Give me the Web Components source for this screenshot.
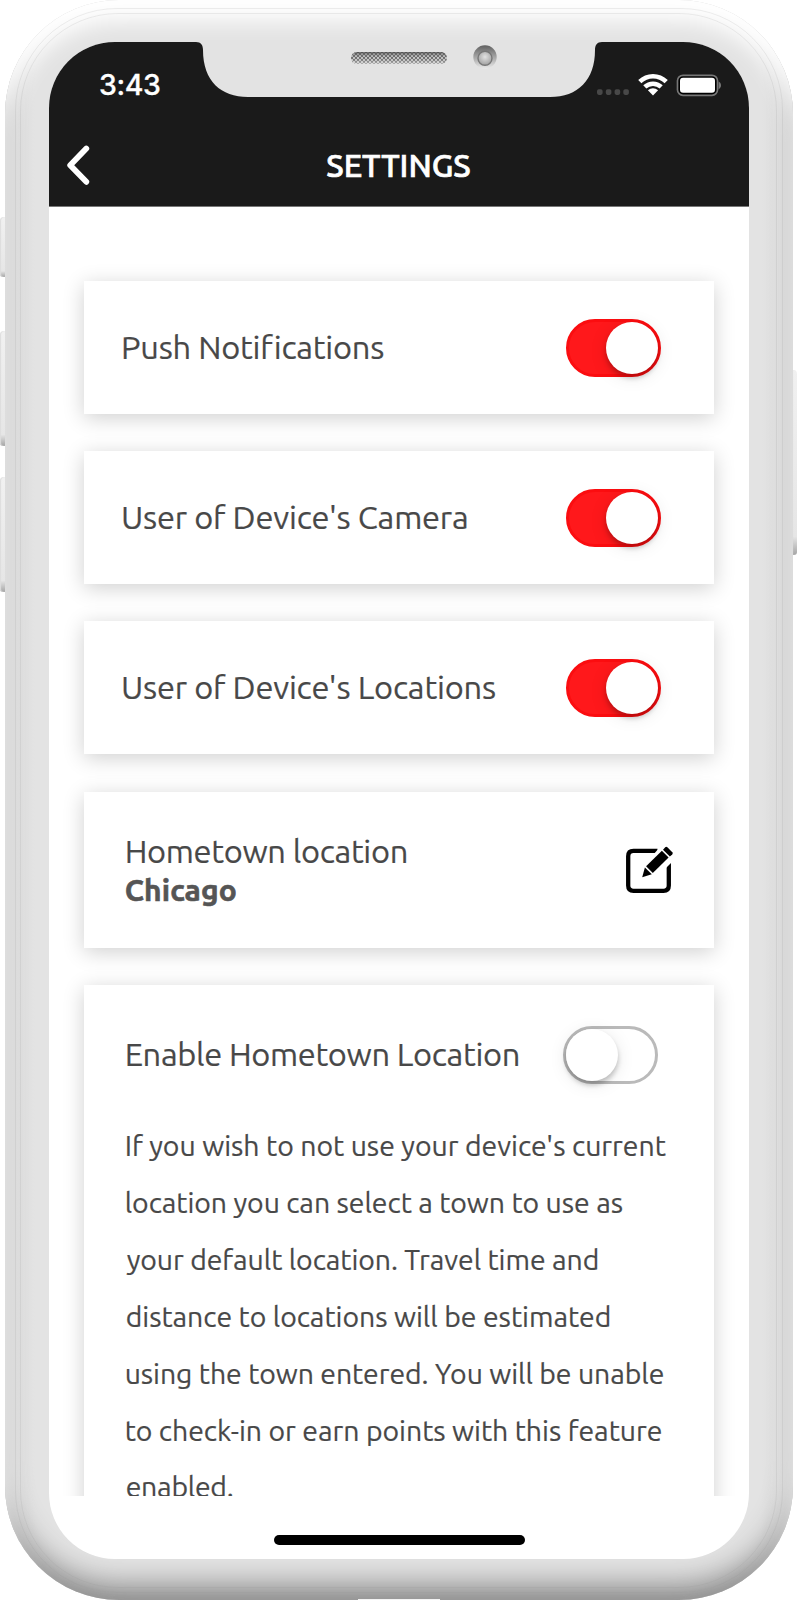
<!DOCTYPE html>
<html lang="en">
<head>
<meta charset="utf-8">
<title>Settings</title>
<style>
body{
    margin: 0;
    background: #fff;
    overflow: hidden;
    font-family: Ubuntu, "Noto Sans", sans-serif;
    color: #484848;
}
</style>
</head>
<body>
<phone-frame>
    <status-bar slot="top" time="3:43"></status-bar>
    <nav-bar slot="top">SETTINGS</nav-bar>

    <setting-card>
        <fit-text width="259">Push Notifications</fit-text>
        <toggle-switch slot="action" on></toggle-switch>
    </setting-card>
    <setting-card>
        <fit-text width="344">User of Device's Camera</fit-text>
        <toggle-switch slot="action" on></toggle-switch>
    </setting-card>
    <setting-card>
        <fit-text width="372">User of Device's Locations</fit-text>
        <toggle-switch slot="action" on></toggle-switch>
    </setting-card>
    <setting-card class="town">
        <fit-text width="280">Hometown location</fit-text>
        <fit-text width="110" class="value">Chicago</fit-text>
        <edit-icon slot="action"></edit-icon>
    </setting-card>
    <setting-card class="enable">
        <fit-text width="392">Enable Hometown Location</fit-text>
        <toggle-switch slot="action"></toggle-switch>
        <info-text slot="more">
            <fit-text width="539">If you wish to not use your device's current</fit-text>
            <fit-text width="496">location you can select a town to use as</fit-text>
            <fit-text width="471">your default location. Travel time and</fit-text>
            <fit-text width="483">distance to locations will be estimated</fit-text>
            <fit-text width="537">using the town entered. You will be unable</fit-text>
            <fit-text width="535">to check-in or earn points with this feature</fit-text>
            <fit-text width="106">enabled.</fit-text>
        </info-text>
    </setting-card>
</phone-frame>

<script>
const makeTemplate = (html) => {
    const template = document.createElement("template")
    template.innerHTML = html
    return template
}

class BaseElement extends HTMLElement{
    constructor(){
        super();
        this.attachShadow({mode: "open"})
        this.shadowRoot.appendChild(this.constructor.template.content.cloneNode(true));
    }
}

// one line of text, tracked so that its ink fills the given width
class FitText extends BaseElement{
    static template = makeTemplate(`
<style>
:host{
    display: block;
    white-space: nowrap;
}
span{
    display: inline-block;
}
</style>
<span><slot></slot></span>
`)
    connectedCallback(){
        const text = this.textContent.trim();
        const ctx = document.createElement('canvas').getContext('2d');
        const style = getComputedStyle(this);
        ctx.font = style.fontWeight + ' ' + style.fontSize + ' ' + style.fontFamily;
        const m = ctx.measureText(text);
        const ink = m.actualBoundingBoxLeft + m.actualBoundingBoxRight;
        const gap = (Number(this.getAttribute('width')) - ink) / (text.length - 1);
        const span = this.shadowRoot.querySelector('span');
        span.style.letterSpacing = gap.toFixed(3) + 'px';
        span.style.marginLeft = m.actualBoundingBoxLeft + 'px';
        span.style.marginRight = -gap + 'px';
    }
}

class PhoneFrame extends BaseElement{
    static template = makeTemplate(`
<style>
:host{
    display: block;
    position: relative;
    width: 797px;
    height: 1600px;
    overflow: hidden;
}
.body{
    position: relative;
    box-sizing: border-box;
    width: 788px;
    height: 1600px;
    margin: 0 4px 0 5px;
    padding: 42px 44px 41px 44px;
    border-radius: 114px;
    background: linear-gradient(90deg, #d6d6d6 0, #dfdfdf 12px, #e3e3e3 30px, #e3e3e3 calc(100% - 32px), #dfdfdf calc(100% - 14px), #cfcfcf 100%);
    box-shadow: inset 0 19px 22px 2px #fff, inset 0 -20px 30px -6px #868686, inset 0 -2px 6px #c4c4c4;
}
.line{
    position: absolute;
    inset: 8px 10.5px 7px 10px;
    border: 1px solid rgba(150,150,150,.16);
    border-radius: 102px;
}
.line + .line{
    inset: 13px 16px 12px 15px;
    border-radius: 98px;
}
.btn{
    position: absolute;
    left: 0;
    width: 5px;
    border-radius: 4px 0 0 3px;
    background: linear-gradient(#f1f1f1, #e6e6e6 90%, #a5a5a5);
    box-shadow: inset 1px 0 1px #ddd;
}
.btn.right{
    left: auto;
    right: 0;
    border-radius: 0 4px 3px 0;
}
.screen{
    position: relative;
    display: flex;
    flex-direction: column;
    width: 700px;
    height: 1517px;
    overflow: hidden;
    border-radius: 66px;
    background: #fff;
}
.head{
    height: 164px;
    background: #1a1a1a;
    border-bottom: 1px solid #777;
    box-sizing: content-box;
}
.list{
    flex: 1;
    overflow: hidden;
    display: flex;
    flex-direction: column;
    gap: 37px;
    padding: 74px 35px 0;
}
.home{
    height: 63px;
    display: flex;
    justify-content: center;
}
.home i{
    width: 251px;
    height: 10px;
    margin-top: 39px;
    border-radius: 5px;
    background: #000;
}
.notch{
    position: absolute;
    left: 191px;
    top: 41px;
}
.port{
    position: absolute;
    left: 358px;
    bottom: 0;
    width: 82px;
    height: 1px;
    background: #f3f3f3;
}
</style>
<div class="btn" style="top:217px;height:60px"></div>
<div class="btn" style="top:331px;height:115px"></div>
<div class="btn" style="top:477px;height:115px"></div>
<div class="btn right" style="top:370px;height:185px"></div>
<div class="body">
    <div class="line"></div><div class="line"></div>
    <div class="screen">
        <div class="head"><slot name="top"></slot></div>
        <div class="list"><slot></slot></div>
        <div class="home"><i></i></div>
    </div>
</div>
<svg class="notch" width="416" height="58" viewBox="0 0 416 58">
    <defs>
        <pattern id="mesh" width="4" height="4" patternUnits="userSpaceOnUse">
            <rect width="4" height="4" fill="#c9c9c9"/>
            <circle cx="1" cy="1" r="1" fill="#4c4c4c"/>
            <circle cx="3" cy="3" r="1" fill="#4c4c4c"/>
        </pattern>
        <linearGradient id="shade" x2="0" y2="1">
            <stop offset="0" stop-color="#444" stop-opacity=".75"/>
            <stop offset=".45" stop-color="#888" stop-opacity=".1"/>
            <stop offset="1" stop-color="#fff" stop-opacity=".5"/>
        </linearGradient>
        <linearGradient id="ring" x2="0" y2="1">
            <stop offset="0" stop-color="#606060"/>
            <stop offset=".5" stop-color="#a5a5a5"/>
            <stop offset="1" stop-color="#e9e9e9"/>
        </linearGradient>
        <radialGradient id="lens" cy=".4">
            <stop offset="0" stop-color="#e2e2e2"/>
            <stop offset="1" stop-color="#aaa"/>
        </radialGradient>
    </defs>
    <path fill="#e3e3e3" d="M0 0V1H5C10 1 12 4 12 9C12 40 30 56 57 56H359C387 56 404 39 404 9C404 4 406 1 411 1H416V0Z"/>
    <rect x="160" y="11" width="96" height="12" rx="6" fill="url(#mesh)"/>
    <rect x="160" y="11" width="96" height="12" rx="6" fill="url(#shade)"/>
    <circle cx="294" cy="16" r="11.7" fill="url(#ring)"/>
    <circle cx="294" cy="17.3" r="7" fill="url(#lens)" stroke="#777" stroke-width="1.4"/>
</svg>
<div class="port"></div>
`)
}

class StatusBar extends BaseElement{
    static template = makeTemplate(`
<style>
:host{
    display: flex;
    justify-content: space-between;
    height: 81px;
    padding: 0 28px 0 51px;
    color: #fff;
    font: 500 28.5px/34px Inter, sans-serif;
    -webkit-text-stroke: .3px #fff;
}
fit-text{
    margin-top: 26px;
}
svg{
    display: block;
    margin-top: 30px;
}
</style>
<fit-text width="60"></fit-text>
<svg width="124" height="26" viewBox="0 0 124 26">
    <g fill="#484848">
        <rect x="0" y="17.3" width="5.6" height="5.6" rx="1.8"/>
        <rect x="8.8" y="17.3" width="5.6" height="5.6" rx="1.8"/>
        <rect x="17.6" y="17.3" width="5.6" height="5.6" rx="1.8"/>
        <rect x="26.3" y="17.3" width="5.6" height="5.6" rx="1.8"/>
    </g>
    <g fill="none" stroke="#fff" stroke-width="4.6">
        <path d="M42.8 9.6C50.3 2.4 61.7 2.4 69.2 9.6"/>
        <path d="M47.8 14.9C52.5 10.6 59.5 10.6 64.2 14.9"/>
    </g>
    <path fill="#fff" d="M56 23.4L50.9 18.2C54 15.5 58 15.5 61.1 18.2Z"/>
    <rect x="80.5" y="3.3" width="40" height="20" rx="5.5" fill="#000" stroke="#777" stroke-width="1.7"/>
    <rect x="83" y="5.8" width="35" height="15" rx="3" fill="#fff"/>
    <path fill="#777" d="M121.6 9.4C124.8 10.8 124.8 15.8 121.6 17.2Z"/>
</svg>
`)
    constructor(){
        super();
        this.shadowRoot.querySelector('fit-text').textContent = this.getAttribute('time');
    }
}

class NavBar extends BaseElement{
    static template = makeTemplate(`
<style>
:host{
    display: grid;
    grid-template-columns: 1fr auto 1fr;
    align-items: center;
    height: 83px;
    color: #fff;
    font-size: 32px;
    font-weight: 500;
    -webkit-text-stroke: .7px #fff;
}
svg{
    margin-left: 16px;
}
</style>
<svg width="28" height="44" viewBox="0 0 28 44">
    <path d="M21.3 5.5L5.2 22.2L21.3 38.8" fill="none" stroke="#fff" stroke-width="5.8" stroke-linecap="round" stroke-linejoin="round"/>
</svg>
<fit-text width="143"></fit-text>
`)
    constructor(){
        super();
        this.shadowRoot.querySelector('fit-text').textContent = this.textContent;
    }
}

class SettingCard extends BaseElement{
    static template = makeTemplate(`
<style>
:host{
    display: block;
    flex: none;
    box-sizing: border-box;
    height: 133px;
    padding: 0 53.5px 0 39px;
    background: #fff;
    box-shadow: 0 4px 20px rgba(0,0,0,.19);
    font-size: 32.6px;
    line-height: 39px;
    -webkit-text-stroke: .2px;
}
.row{
    display: flex;
    align-items: center;
    justify-content: space-between;
    height: 133px;
}
:host(.town){
    height: 156px;
    margin-top: 1px;
    padding: 0 40px 0 42.7px;
}
:host(.town) .row{
    height: 158px;
}
:host(.enable){
    height: 600px;
    padding: 0 56px 0 42.7px;
}
:host(.enable) .row{
    height: 139px;
}
::slotted(.value){
    color: #555;
    font-size: 30px;
    font-weight: 700;
    margin-left: -1px;
    -webkit-text-stroke: .6px;
}
</style>
<div class="row">
    <div class="label"><slot></slot></div>
    <slot name="action"></slot>
</div>
<slot name="more"></slot>
`)
}

class InfoText extends BaseElement{
    static template = makeTemplate(`
<style>
:host{
    display: block;
    margin: -6px -56px 0 0;
    font-size: 28.4px;
    line-height: 56.9px;
}
</style>
<slot></slot>
`)
}

class ToggleSwitch extends BaseElement{
    static template = makeTemplate(`
<style>
:host{
    display: flex;
    flex: none;
    box-sizing: border-box;
    width: 95px;
    height: 58px;
    border: 3px solid #bababa;
    border-radius: 29px;
    cursor: pointer;
}
:host([on]){
    justify-content: flex-end;
    background: #ff181b;
    border-color: #fb0d10;
}
i{
    width: 52px;
    height: 52px;
    border-radius: 50%;
    background: #fff;
    box-shadow: 0 4px 5px rgba(0,0,0,.22), 0 3px 18px rgba(0,0,0,.1);
}
</style>
<i></i>
`)
    connectedCallback(){
        this.addEventListener('click', () => this.toggleAttribute('on'))
    }
}

class EditIcon extends BaseElement{
    static template = makeTemplate(`
<style>
:host{
    display: block;
    flex: none;
}
svg{
    display: block;
}
</style>
<svg width="48" height="50" viewBox="0 0 48 50">
    <path d="M31.5 4.9H7.5Q2.2 4.9 2.2 10.2V39.6Q2.2 44.9 7.5 44.9H37.5Q42.8 44.9 42.8 39.6V15" fill="none" stroke="#000" stroke-width="4.3"/>
    <path fill="#fff" d="M27 9L34 1H48V14L38 24Z"/>
    <path d="M16.2 31.2L18.9 21.5L25.8 28.2Z"/>
    <path d="M20.1 20.3L35.9 4.8L42.6 11.6L26.8 27Z"/>
    <path d="M37 3.7L39.2 1.3Q40.3 .2 41.4 1.3L46.3 6.3Q47.3 7.4 46.2 8.5L43.9 10.6Z"/>
</svg>
`)
}

customElements.define('phone-frame', PhoneFrame);
customElements.define('status-bar', StatusBar);
customElements.define('nav-bar', NavBar);
customElements.define('setting-card', SettingCard);
customElements.define('info-text', InfoText);
customElements.define('toggle-switch', ToggleSwitch);
customElements.define('edit-icon', EditIcon);
// last: it measures text with the font size that the others set
customElements.define('fit-text', FitText);
</script>
</body>
</html>
